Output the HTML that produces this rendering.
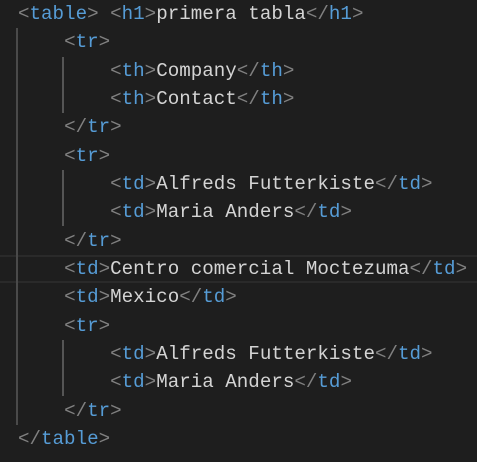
<!DOCTYPE html>
<html><head><style>
html,body{margin:0;padding:0;background:#1e1e1e;width:477px;height:462px;overflow:hidden}
.c{position:absolute;left:18px;top:0;font-family:"Liberation Mono",monospace;font-size:19.2px;line-height:28.33px;color:#d4d4d4;white-space:pre}
.b{color:#808080}.t{color:#569cd6}
.g{position:absolute;width:2px;background:#555}
.hl{position:absolute;left:0;width:477px;top:255px;height:24px;border-top:2px solid #2a2a2a;border-bottom:2px solid #2a2a2a}
</style></head><body>
<div class="hl"></div>
<div class="g" style="left:16px;top:28px;height:397px;background:#4a4a4a"></div>
<div class="g" style="left:62px;top:57px;height:56px"></div>
<div class="g" style="left:62px;top:170px;height:56px"></div>
<div class="g" style="left:62px;top:340px;height:56px"></div>
<div class="c"><span class="b">&lt;</span><span class="t">table</span><span class="b">&gt;</span> <span class="b">&lt;</span><span class="t">h1</span><span class="b">&gt;</span>primera tabla<span class="b">&lt;/</span><span class="t">h1</span><span class="b">&gt;</span>
    <span class="b">&lt;</span><span class="t">tr</span><span class="b">&gt;</span>
        <span class="b">&lt;</span><span class="t">th</span><span class="b">&gt;</span>Company<span class="b">&lt;/</span><span class="t">th</span><span class="b">&gt;</span>
        <span class="b">&lt;</span><span class="t">th</span><span class="b">&gt;</span>Contact<span class="b">&lt;/</span><span class="t">th</span><span class="b">&gt;</span>
    <span class="b">&lt;/</span><span class="t">tr</span><span class="b">&gt;</span>
    <span class="b">&lt;</span><span class="t">tr</span><span class="b">&gt;</span>
        <span class="b">&lt;</span><span class="t">td</span><span class="b">&gt;</span>Alfreds Futterkiste<span class="b">&lt;/</span><span class="t">td</span><span class="b">&gt;</span>
        <span class="b">&lt;</span><span class="t">td</span><span class="b">&gt;</span>Maria Anders<span class="b">&lt;/</span><span class="t">td</span><span class="b">&gt;</span>
    <span class="b">&lt;/</span><span class="t">tr</span><span class="b">&gt;</span>
    <span class="b">&lt;</span><span class="t">td</span><span class="b">&gt;</span>Centro comercial Moctezuma<span class="b">&lt;/</span><span class="t">td</span><span class="b">&gt;</span>
    <span class="b">&lt;</span><span class="t">td</span><span class="b">&gt;</span>Mexico<span class="b">&lt;/</span><span class="t">td</span><span class="b">&gt;</span>
    <span class="b">&lt;</span><span class="t">tr</span><span class="b">&gt;</span>
        <span class="b">&lt;</span><span class="t">td</span><span class="b">&gt;</span>Alfreds Futterkiste<span class="b">&lt;/</span><span class="t">td</span><span class="b">&gt;</span>
        <span class="b">&lt;</span><span class="t">td</span><span class="b">&gt;</span>Maria Anders<span class="b">&lt;/</span><span class="t">td</span><span class="b">&gt;</span>
    <span class="b">&lt;/</span><span class="t">tr</span><span class="b">&gt;</span>
<span class="b">&lt;/</span><span class="t">table</span><span class="b">&gt;</span></div>
</body></html>
